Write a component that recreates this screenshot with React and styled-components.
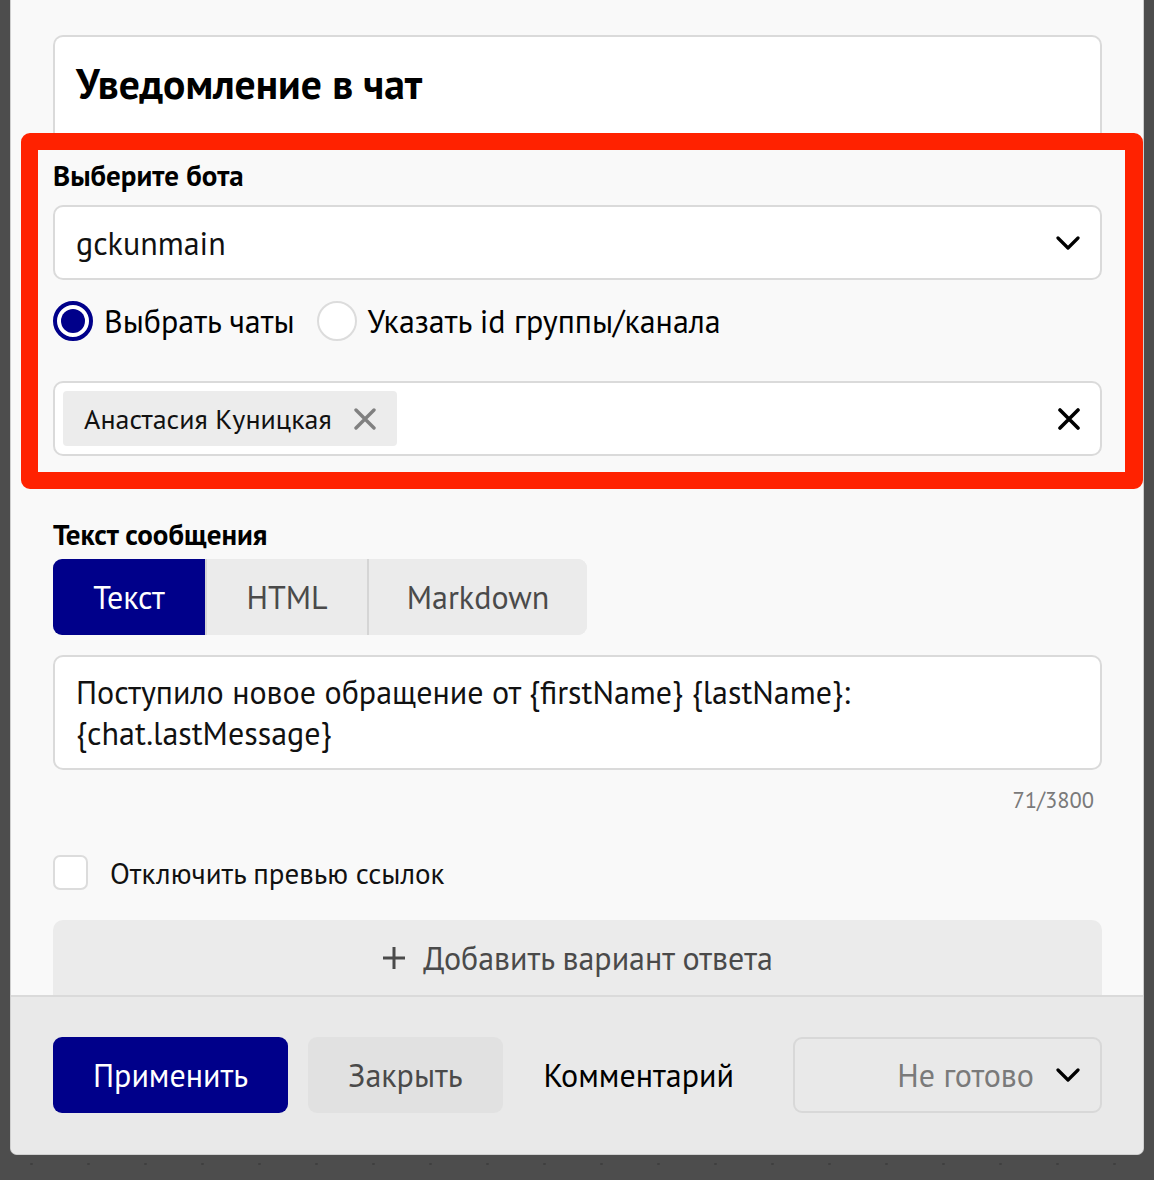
import React, { useState } from "react";
import styled, { createGlobalStyle } from "styled-components";

const GlobalStyle = createGlobalStyle`
  html, body {
    margin: 0;
    padding: 0;
    background: #4d4d4d;
  }
  body {
    font-family: "PT Sans", "Noto Sans", Roboto, sans-serif;
    color: #000;
  }
  * { box-sizing: border-box; }
`;

const NAVY = "#00008a";

const Page = styled.div`
  padding: 0 10px 26px 10px;
  min-height: 1180px;
  background-color: #4d4d4d;
  background-image: radial-gradient(circle, #3f3f3f 1px, transparent 1.5px);
  background-size: 57px 60px;
  background-position: 3px 1134px;
  background-repeat: repeat-x;
`;

const Modal = styled.div`
  background: #f9f9f9;
  border: 1px solid #cfcfcf;
  border-top: none;
  border-radius: 0 0 7px 7px;
  overflow: hidden;
`;

const Body = styled.div`
  padding: 35px 41px 0 42px;
`;

const TitleCard = styled.div`
  height: 105px;
  background: #fff;
  border: 2px solid #dadada;
  border-bottom: none;
  border-radius: 10px 10px 0 0;
  padding: 22px 21px 0;

  h1 {
    margin: 0;
    font-size: 41.6px;
    line-height: 50px;
    font-weight: 700;
  }
`;

const BotSection = styled.section`
  position: relative;
  margin-top: 10px;
  padding-top: 8px;
`;

const Highlight = styled.div`
  position: absolute;
  top: -17px;
  left: -32px;
  right: -41px;
  bottom: -33px;
  border: 17px solid #ff2200;
  border-right-width: 18px;
  border-radius: 9px;
  pointer-events: none;
`;

const Label = styled.div`
  font-size: 29px;
  line-height: 34px;
  font-weight: 700;
  margin-top: ${(p) => p.$top || 0}px;
`;

const Field = styled.div`
  display: flex;
  align-items: center;
  height: 75px;
  margin-top: ${(p) => p.$top || 0}px;
  background: #fff;
  border: 2px solid #dadada;
  border-radius: 10px;
  padding: 0 20px 0 ${(p) => p.$pl ?? 21}px;
  font-size: 32px;
  color: #111;
`;

const Grow = styled.div`
  flex: 1;
  display: flex;
  align-items: center;
`;

const RadioRow = styled.div`
  display: flex;
  align-items: center;
  gap: 22px;
  margin-top: 21px;
  height: 40px;
`;

const RadioLabel = styled.label`
  display: flex;
  align-items: center;
  gap: 11px;
  font-size: 32px;
  cursor: pointer;
`;

const RadioDot = styled.span`
  width: 40px;
  height: 40px;
  border-radius: 50%;
  background: #fff;
  border: ${(p) => (p.$on ? `4px solid ${NAVY}` : "2px solid #dcdcdc")};
  display: flex;
  align-items: center;
  justify-content: center;

  &::after {
    content: "";
    width: 24px;
    height: 24px;
    border-radius: 50%;
    background: ${(p) => (p.$on ? NAVY : "transparent")};
  }
`;

const Chip = styled.div`
  display: flex;
  align-items: center;
  gap: 22px;
  height: 55px;
  padding: 0 21px;
  background: #ececec;
  border-radius: 4px;
  font-size: 28px;
  color: #111;
`;

const IconBtn = styled.span`
  display: flex;
  align-items: center;
  justify-content: center;
  color: ${(p) => p.$color || "#000"};
`;

const Segmented = styled.div`
  display: inline-flex;
  margin-top: 8px;
  height: 76px;
  border-radius: 9px;
  overflow: hidden;
  background: #ebebeb;
`;

const Tab = styled.button`
  border: none;
  font-family: inherit;
  font-size: 32px;
  width: ${(p) => p.$w}px;
  background: ${(p) => (p.$active ? NAVY : "#ebebeb")};
  color: ${(p) => (p.$active ? "#fff" : "#4a4a4a")};
  & + & {
    border-left: ${(p) => (p.$active ? "none" : "2px solid #d5d5d5")};
  }
  &:nth-child(2) {
    border-left: none;
  }
  cursor: pointer;
`;

const TextArea = styled.div`
  margin-top: 20px;
  height: 115px;
  background: #fff;
  border: 2px solid #dadada;
  border-radius: 10px;
  padding: 15px 21px;
  font-size: 32px;
  line-height: 41px;
  color: #111;
`;

const Counter = styled.div`
  margin-top: 17px;
  text-align: right;
  padding-right: 8px;
  font-size: 22.5px;
  line-height: 26px;
  color: #7a7a7a;
`;

const CheckRow = styled.label`
  display: flex;
  align-items: center;
  gap: 22px;
  height: 35px;
  margin-top: 42px;
  font-size: 29px;
  color: #111;
`;

const CheckBox = styled.span`
  width: 35px;
  height: 35px;
  border: 2px solid #dcdcdc;
  border-radius: 7px;
  background: #fff;
`;

const AddButton = styled.button`
  width: 100%;
  margin-top: 30px;
  height: 75px;
  display: flex;
  align-items: center;
  justify-content: center;
  gap: 17px;
  border: none;
  border-radius: 10px 10px 0 0;
  background: #ebebeb;
  font-family: inherit;
  font-size: 32px;
  color: #4a4a4a;
`;

const Footer = styled.div`
  display: flex;
  align-items: center;
  gap: 20px;
  padding: 40px 41px 41px 42px;
  background: #e9e9e9;
  border-top: 2px solid #dadada;
`;

const Button = styled.button`
  height: 76px;
  padding: 0 ${(p) => p.$px || 40}px;
  border: none;
  border-radius: 9px;
  font-family: inherit;
  font-size: 32px;
  background: ${(p) =>
    p.$variant === "primary" ? NAVY : p.$variant === "ghost" ? "transparent" : "#e1e1e1"};
  color: ${(p) =>
    p.$variant === "primary" ? "#fff" : p.$variant === "ghost" ? "#000" : "#4a4a4a"};
  cursor: pointer;
`;

const StatusSelect = styled.div`
  margin-left: auto;
  width: 309px;
  height: 76px;
  display: flex;
  align-items: center;
  justify-content: flex-end;
  gap: 22px;
  padding: 0 20px;
  border: 2px solid #d8d8d8;
  border-radius: 9px;
  font-size: 32px;
  color: #7a7a7a;
`;

const Chevron = () => (
  <svg width="24" height="14" viewBox="0 0 24 14" fill="none">
    <path d="M2 2l10 10L22 2" stroke="#000" strokeWidth="3.2" strokeLinecap="round" strokeLinejoin="round" />
  </svg>
);

const Cross = ({ size = 22, w = 3.4 }) => (
  <svg width={size} height={size} viewBox="0 0 22 22" fill="none">
    <path d="M2 2l18 18M20 2L2 20" stroke="currentColor" strokeWidth={w} strokeLinecap="round" />
  </svg>
);

const Plus = () => (
  <svg width="24" height="24" viewBox="0 0 24 24" fill="none">
    <path d="M12 1v22M1 12h22" stroke="#4a4a4a" strokeWidth="3" />
  </svg>
);

export default function App() {
  const [mode, setMode] = useState("chats");
  const [format, setFormat] = useState("text");

  return (
    <>
      <GlobalStyle />
      <Page>
        <Modal>
          <Body>
            <TitleCard>
              <h1>Уведомление в чат</h1>
            </TitleCard>

            <BotSection>
              <Label>Выберите бота</Label>
              <Field $top={13}>
                <Grow>gckunmain</Grow>
                <Chevron />
              </Field>

              <RadioRow>
                <RadioLabel onClick={() => setMode("chats")}>
                  <RadioDot $on={mode === "chats"} />
                  Выбрать чаты
                </RadioLabel>
                <RadioLabel onClick={() => setMode("id")}>
                  <RadioDot $on={mode === "id"} />
                  Указать id группы/канала
                </RadioLabel>
              </RadioRow>

              <Field $top={40} $pl={8}>
                <Grow>
                  <Chip>
                    Анастасия Куницкая
                    <IconBtn $color="#808080">
                      <Cross />
                    </IconBtn>
                  </Chip>
                </Grow>
                <IconBtn>
                  <Cross w={3.6} />
                </IconBtn>
              </Field>

              <Highlight />
            </BotSection>

            <Label $top={61}>Текст сообщения</Label>
            <Segmented>
              <Tab $w={152} $active={format === "text"} onClick={() => setFormat("text")}>
                Текст
              </Tab>
              <Tab $w={162} $active={format === "html"} onClick={() => setFormat("html")}>
                HTML
              </Tab>
              <Tab $w={220} $active={format === "md"} onClick={() => setFormat("md")}>
                Markdown
              </Tab>
            </Segmented>

            <TextArea>
              Поступило новое обращение от {"{firstName}"} {"{lastName}"}:
              <br />
              {"{chat.lastMessage}"}
            </TextArea>
            <Counter>71/3800</Counter>

            <CheckRow>
              <CheckBox />
              Отключить превью ссылок
            </CheckRow>

            <AddButton>
              <Plus />
              Добавить вариант ответа
            </AddButton>
          </Body>

          <Footer>
            <Button $variant="primary" $px={40}>Применить</Button>
            <Button $px={40}>Закрыть</Button>
            <Button $variant="ghost" $px={21}>Комментарий</Button>
            <StatusSelect>
              Не готово
              <Chevron />
            </StatusSelect>
          </Footer>
        </Modal>
      </Page>
    </>
  );
}
